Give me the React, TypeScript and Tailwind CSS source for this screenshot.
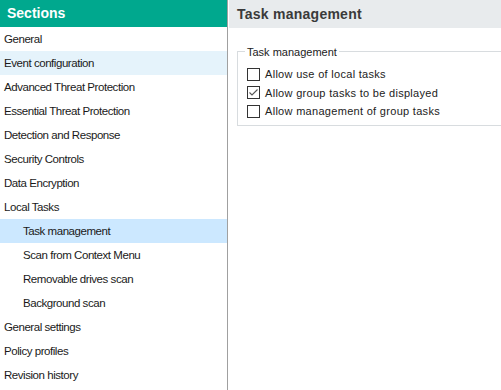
const sections = [
  { label: 'General' },
  { label: 'Event configuration', hover: true },
  { label: 'Advanced Threat Protection' },
  { label: 'Essential Threat Protection' },
  { label: 'Detection and Response' },
  { label: 'Security Controls' },
  { label: 'Data Encryption' },
  { label: 'Local Tasks' },
  { label: 'Task management', child: true, selected: true },
  { label: 'Scan from Context Menu', child: true },
  { label: 'Removable drives scan', child: true },
  { label: 'Background scan', child: true },
  { label: 'General settings' },
  { label: 'Policy profiles' },
  { label: 'Revision history' },
]

const options = [
  { label: 'Allow use of local tasks', checked: false },
  { label: 'Allow group tasks to be displayed', checked: true },
  { label: 'Allow management of group tasks', checked: false },
]

const Checkbox = ({ checked }: { checked: boolean }) => (
  <span className="flex h-[13px] w-[13px] shrink-0 items-center justify-center border border-[#333] bg-white">
    {checked && (
      <svg width="11" height="11" viewBox="0 0 11 11" fill="none">
        <path d="M1.5 5.5 L4 8 L9.5 2.5" stroke="#555" strokeWidth="1.1" />
      </svg>
    )}
  </span>
)

export default function App() {
  return (
    <div
      className="flex h-[390px] w-[501px] bg-white text-[11px] text-[#1a1a1a]"
      style={{ fontFamily: '"Liberation Sans", Arial, sans-serif' }}
    >
      {/* left: sections tree */}
      <div className="flex w-[228px] shrink-0 flex-col border-r border-[#a0a0a0]">
        <div className="flex h-[27px] items-center bg-[#00a88e] pl-[7px] text-[14px] font-bold text-white">
          Sections
        </div>
        {sections.map((s) => (
          <div
            key={s.label}
            className={
              'flex h-6 items-center pt-px text-[11.5px] tracking-[-0.45px] ' +
              (s.child ? 'pl-[23px] ' : 'pl-1 ') +
              (s.selected ? 'bg-[#cce8ff]' : s.hover ? 'bg-[#e5f3fb]' : '')
            }
          >
            {s.label}
          </div>
        ))}
      </div>

      {/* right: settings page */}
      <div className="ml-px flex flex-1 flex-col">
        <div className="flex h-[28px] items-center bg-[#e8ebed] pl-[8px] text-[14px] font-bold tracking-[0.25px] text-[#3a3a3a]">
          Task management
        </div>
        <div className="relative ml-[8px] mt-[23px] h-[75px] border border-r-0 border-[#d8dcdf] pl-[9px] pt-[13px]">
          <span className="absolute -top-[7px] left-[7px] bg-white px-[2px] leading-[14px] text-[#222]">
            Task management
          </span>
          <div className="flex flex-col">
            {options.map((o) => (
              <label key={o.label} className="flex h-[18.5px] items-center gap-[5px] tracking-[0.3px] text-[#222]">
                <Checkbox checked={o.checked} />
                {o.label}
              </label>
            ))}
          </div>
        </div>
      </div>
    </div>
  )
}
